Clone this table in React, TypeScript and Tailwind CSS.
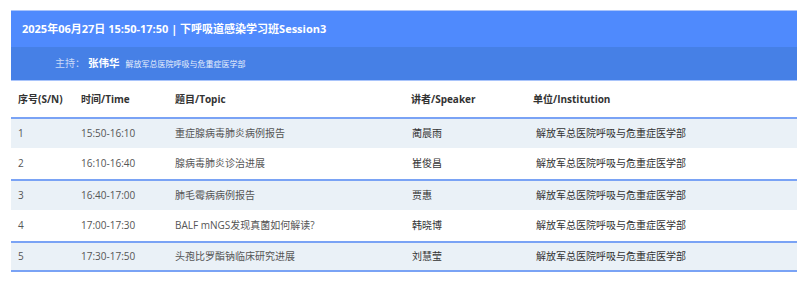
const rows = [
  { no: "1", time: "15:50-16:10", topic: "重症腺病毒肺炎病例报告", speaker: "蔺晨雨", inst: "解放军总医院呼吸与危重症医学部" },
  { no: "2", time: "16:10-16:40", topic: "腺病毒肺炎诊治进展", speaker: "崔俊昌", inst: "解放军总医院呼吸与危重症医学部" },
  { no: "3", time: "16:40-17:00", topic: "肺毛霉病病例报告", speaker: "贾惠", inst: "解放军总医院呼吸与危重症医学部" },
  { no: "4", time: "17:00-17:30", topic: "BALF mNGS发现真菌如何解读?", speaker: "韩晓博", inst: "解放军总医院呼吸与危重症医学部" },
  { no: "5", time: "17:30-17:50", topic: "头孢比罗酯钠临床研究进展", speaker: "刘慧莹", inst: "解放军总医院呼吸与危重症医学部" },
];

const cols = "grid grid-cols-[63px_94px_236px_122px_1fr] pl-[7px]";

export default function App() {
  return (
    <div
      className="w-[800px] h-[303px] bg-white pt-[10px] pl-[11px] pr-[3px]"
      style={{ fontFamily: '"Open Sans", "Noto Sans CJK SC", sans-serif' }}
    >
      <div className="border-t border-[#a9c4fb] bg-[#4f8afd] h-[37px] flex items-center pl-[11px]">
        <span className="text-white font-bold text-[11px]">2025年06月27日 15:50-17:50 | 下呼吸道感染学习班Session3</span>
      </div>
      <div className="bg-[#4680e6] h-[34px] flex items-center pl-[44px] border-b border-[#a9c4fb]">
        <span className="text-[#c9d9f8] text-[10px]">主持：</span>
        <span className="text-white font-bold text-[10.5px] ml-[3px]">张伟华</span>
        <span className="text-[#e6eefc] text-[8px] ml-[6px]">解放军总医院呼吸与危重症医学部</span>
      </div>
      <div className={`${cols} h-[36px] items-center text-[10px] font-bold text-[#333]`}>
        <div>序号(S/N)</div>
        <div>时间/Time</div>
        <div>题目/Topic</div>
        <div>讲者/Speaker</div>
        <div>单位/Institution</div>
      </div>
      {rows.map((r, i) => (
        <div
          key={r.no}
          className={`${cols} h-[31px] items-center text-[10px] text-[#555] ${
            i % 2 === 0 ? "bg-[#eaf1f7] border-t-2 border-[#7aa3f5]" : "bg-white"
          } ${i === rows.length - 1 ? "border-b-2" : ""}`}
        >
          <div>{r.no}</div>
          <div>{r.time}</div>
          <div>{r.topic}</div>
          <div className="pl-[1px] text-[#333]">{r.speaker}</div>
          <div className="pl-[3px] text-[#333]">{r.inst}</div>
        </div>
      ))}
    </div>
  );
}
